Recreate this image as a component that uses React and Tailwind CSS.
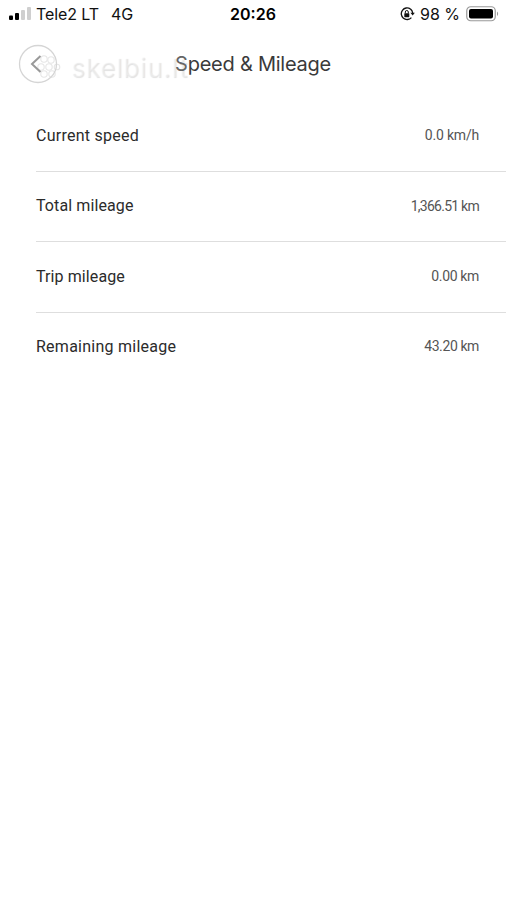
import React from 'react';

const rows = [
  { label: 'Current speed', value: '0.0 km/h', labelStyle: 'tracking-[0.25px]', valueStyle: 'tracking-[-0.2px]' },
  { label: 'Total mileage', value: '1,366.51 km', labelStyle: 'tracking-[0.1px]', valueStyle: 'tracking-[-0.75px]' },
  { label: 'Trip mileage', value: '0.00 km', labelStyle: 'tracking-[0.1px]', valueStyle: 'tracking-[-0.35px]' },
  { label: 'Remaining mileage', value: '43.20 km', labelStyle: 'tracking-[0.25px]', valueStyle: 'tracking-[-0.4px]' },
];

function StatusBar() {
  return (
    <div className="h-7 grid grid-cols-[1fr_auto_1fr] items-center pl-[9px] pr-2 text-[16px] leading-7 text-[#111]">
      <div className="flex items-center">
        <svg width="23" height="14" viewBox="0 0 23 14" className="shrink-0">
          <rect x="0" y="8.5" width="4" height="4.5" rx="1" fill="#000" />
          <rect x="6" y="6" width="4" height="7" rx="1" fill="#000" />
          <rect x="12" y="3" width="4" height="10" rx="1" fill="#cfcfcf" />
          <rect x="18" y="0" width="4" height="13" rx="1" fill="#cfcfcf" />
        </svg>
        <span className="ml-1 tracking-[-0.1px]">Tele2 LT</span>
        <span className="ml-3 tracking-[-0.1px]">4G</span>
      </div>
      <div className="pr-px font-semibold text-black">20:26</div>
      <div className="flex items-center justify-end">
        <svg width="15" height="14" viewBox="0 0 15 14" className="shrink-0">
          <path d="M10.3 1.9A5.8 5.8 0 1 0 11.4 10.6" fill="none" stroke="#111" strokeWidth="1.3" />
          <path d="M10.3 1.9A5.9 5.9 0 0 1 12.7 6" fill="none" stroke="#111" strokeWidth="1.3" />
          <path d="M10.4 5.8h4.4l-2.1 2.8z" fill="#111" />
          <rect x="4.3" y="6.2" width="5" height="4" rx="0.6" fill="#111" />
          <path d="M5.3 6.4V5a1.5 1.5 0 0 1 3 0v1.4" fill="none" stroke="#111" strokeWidth="1" />
        </svg>
        <span className="ml-[5px] whitespace-nowrap">98 %</span>
        <svg width="33" height="16" viewBox="0 0 33 16" className="ml-[6px] -mr-px -mt-px shrink-0">
          <rect x="0.75" y="0.75" width="28.5" height="14" rx="4" fill="none" stroke="#999" strokeWidth="1.2" />
          <rect x="3" y="3" width="24" height="9.5" rx="2" fill="#000" />
          <path d="M31 5.5c1.5.8 1.5 3.7 0 4.5z" fill="#999" />
        </svg>
      </div>
    </div>
  );
}

function Watermark() {
  return (
    <div className="absolute left-[34px] top-[25px] flex items-center gap-[9px] pointer-events-none">
      <svg width="28" height="30" viewBox="0 0 28 30" fill="none" stroke="#e6e6e6" strokeWidth="1.1">
        <circle cx="10" cy="6" r="3.2" />
        <circle cx="17" cy="7" r="3.2" />
        <circle cx="7" cy="14" r="3.2" />
        <circle cx="15" cy="14" r="3.2" />
        <circle cx="23" cy="14" r="2.8" />
        <circle cx="10" cy="21" r="3.2" />
        <circle cx="18" cy="21" r="3.2" />
      </svg>
      <span className="text-[26px] leading-[30px] tracking-[0.8px] text-white/30 [text-shadow:1px_1px_1px_#e2e2e2]">
        skelbiu.lt
      </span>
    </div>
  );
}

function Header() {
  return (
    <header className="relative h-[72px] grid grid-cols-[1fr_auto_1fr] items-center pl-[18px] pr-[18px]">
      <Watermark />
      <button className="relative w-10 h-10 flex items-center justify-center" aria-label="Back">
        <svg width="40" height="40" viewBox="0 0 40 40" fill="none">
          <circle cx="20" cy="20" r="18.5" stroke="#d5d5d5" strokeWidth="1.3" />
          <path d="M22.5 12L14 20l8.5 8" stroke="#999" strokeWidth="2" />
        </svg>
      </button>
      <h1 className="relative text-[20px] leading-7 tracking-[-0.25px] text-[#3a3a3a]">
        <span className="text-[#666]">S</span>peed &amp; Mileage
      </h1>
    </header>
  );
}

export default function App() {
  return (
    <div className="w-full h-[900px] overflow-hidden bg-white font-['Inter',sans-serif]">
      <StatusBar />
      <Header />
      <main className="pl-9 pt-[1.6px] font-['Roboto',sans-serif]">
        {rows.map((row) => (
          <div
            key={row.label}
            className="h-[70.4px] flex items-center justify-between pr-[27px] pb-px border-b border-[#dedede] last:border-transparent"
          >
            <span className={`text-[16px] text-[#2b2b2b] ${row.labelStyle}`}>{row.label}</span>
            <span className={`text-[14px] text-[#555] ${row.valueStyle}`}>{row.value}</span>
          </div>
        ))}
      </main>
    </div>
  );
}
